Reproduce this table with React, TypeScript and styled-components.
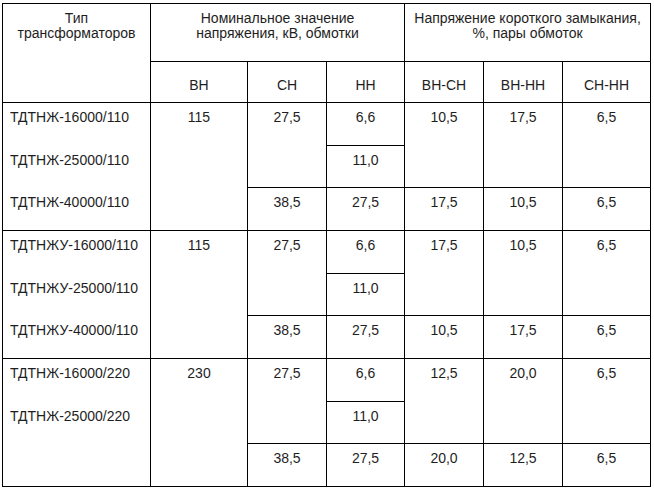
import * as React from 'react';
import styled, { createGlobalStyle } from 'styled-components';

type Group = {
    names: string[];
    vn: string;
    sn: [string, string];
    nn: [string, string, string];
    vnSn: [string, string];
    vnNn: [string, string];
    snNn: [string, string];
};

const groups: Group[] = [
    {
        names: ['ТДТНЖ-16000/110', 'ТДТНЖ-25000/110', 'ТДТНЖ-40000/110'],
        vn: '115',
        sn: ['27,5', '38,5'],
        nn: ['6,6', '11,0', '27,5'],
        vnSn: ['10,5', '17,5'],
        vnNn: ['17,5', '10,5'],
        snNn: ['6,5', '6,5'],
    },
    {
        names: ['ТДТНЖУ-16000/110', 'ТДТНЖУ-25000/110', 'ТДТНЖУ-40000/110'],
        vn: '115',
        sn: ['27,5', '38,5'],
        nn: ['6,6', '11,0', '27,5'],
        vnSn: ['17,5', '10,5'],
        vnNn: ['10,5', '17,5'],
        snNn: ['6,5', '6,5'],
    },
    {
        names: ['ТДТНЖ-16000/220', 'ТДТНЖ-25000/220', ''],
        vn: '230',
        sn: ['27,5', '38,5'],
        nn: ['6,6', '11,0', '27,5'],
        vnSn: ['12,5', '20,0'],
        vnNn: ['20,0', '12,5'],
        snNn: ['6,5', '6,5'],
    },
];

// row heights inside one group of three transformers
const rowHeights = [43, 42, 43];

const App: React.FC = () => {
    return (
        <>
            <GlobalStyle />
            <Page>
                <Table>
                    <colgroup>
                        <col style={{ width: 148 }} />
                        <col style={{ width: 97 }} />
                        <col style={{ width: 79 }} />
                        <col style={{ width: 78 }} />
                        <col style={{ width: 79 }} />
                        <col style={{ width: 79 }} />
                        <col style={{ width: 88 }} />
                    </colgroup>
                    <thead>
                        <HeadRow $height={58}>
                            <HeadCell rowSpan={2}>
                                Тип
                                <br />
                                трансформаторов
                            </HeadCell>
                            <HeadCell colSpan={3}>
                                Номинальное значение
                                <br />
                                напряжения, кВ, обмотки
                            </HeadCell>
                            <HeadCell colSpan={3}>
                                Напряжение короткого замыкания,
                                <br />
                                %, пары обмоток
                            </HeadCell>
                        </HeadRow>
                        <HeadRow $height={41}>
                            <SubHeadCell>ВН</SubHeadCell>
                            <SubHeadCell>СН</SubHeadCell>
                            <SubHeadCell>НН</SubHeadCell>
                            <SubHeadCell>ВН-СН</SubHeadCell>
                            <SubHeadCell>ВН-НН</SubHeadCell>
                            <SubHeadCell>СН-НН</SubHeadCell>
                        </HeadRow>
                    </thead>
                    <tbody>
                        {groups.map((g, gi) => (
                            <React.Fragment key={gi}>
                                <Row $height={rowHeights[0]}>
                                    <NameCell $joinBelow>{g.names[0]}</NameCell>
                                    <Cell rowSpan={3}>{g.vn}</Cell>
                                    <Cell rowSpan={2}>{g.sn[0]}</Cell>
                                    <Cell>{g.nn[0]}</Cell>
                                    <Cell rowSpan={2}>{g.vnSn[0]}</Cell>
                                    <Cell rowSpan={2}>{g.vnNn[0]}</Cell>
                                    <Cell rowSpan={2}>{g.snNn[0]}</Cell>
                                </Row>
                                <Row $height={rowHeights[1]}>
                                    <NameCell $joinAbove $joinBelow>
                                        {g.names[1]}
                                    </NameCell>
                                    <Cell>{g.nn[1]}</Cell>
                                </Row>
                                <Row $height={rowHeights[2]}>
                                    <NameCell $joinAbove>{g.names[2]}</NameCell>
                                    <Cell>{g.sn[1]}</Cell>
                                    <Cell>{g.nn[2]}</Cell>
                                    <Cell>{g.vnSn[1]}</Cell>
                                    <Cell>{g.vnNn[1]}</Cell>
                                    <Cell>{g.snNn[1]}</Cell>
                                </Row>
                            </React.Fragment>
                        ))}
                    </tbody>
                </Table>
            </Page>
        </>
    );
};

const GlobalStyle = createGlobalStyle`
    body {
        margin: 0;
        background: #ffffff;
    }
`;

const Page = styled.div`
    padding: 3px 0 0 2px;
    font-family: 'Liberation Sans', Arial, sans-serif;
    font-size: 14px;
    color: #1e1e1e;
`;

const Table = styled.table`
    border-collapse: collapse;
    table-layout: fixed;
    width: 649px;
`;

const HeadRow = styled.tr<{ $height: number }>`
    height: ${(props) => props.$height}px;
`;

const Row = styled.tr<{ $height: number }>`
    height: ${(props) => props.$height}px;
`;

const BaseCell = styled.td`
    border: 1px solid #000;
    padding: 0;
    line-height: 16px;
    vertical-align: top;
    text-align: center;
`;

const HeadCell = styled(BaseCell).attrs({ as: 'th' })`
    font-weight: normal;
    line-height: 15px;
    padding-top: 7px;
`;

const SubHeadCell = styled(HeadCell)`
    line-height: 16px;
    padding-top: 15px;
`;

const Cell = styled(BaseCell)`
    padding-top: 6px;
`;

const NameCell = styled(BaseCell)<{ $joinAbove?: boolean; $joinBelow?: boolean }>`
    padding: 6px 0 0 7px;
    text-align: left;
    ${(props) => (props.$joinAbove ? 'border-top: none;' : '')}
    ${(props) => (props.$joinBelow ? 'border-bottom: none;' : '')}
`;

export default App;
